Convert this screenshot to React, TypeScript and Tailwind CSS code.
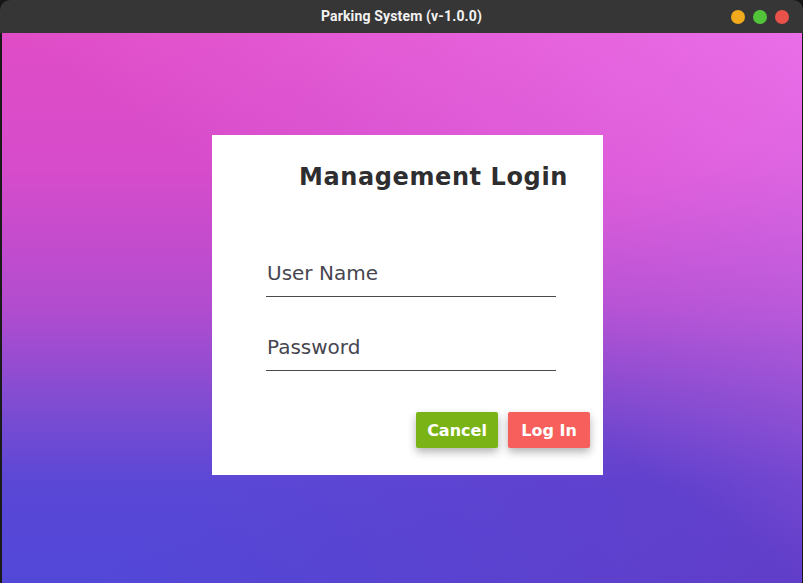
const TitleBar = () => {
  return (
    <div className="relative flex h-[33px] shrink-0 items-center justify-center rounded-t-[10px] bg-[#363636]">
      <span className="font-['Roboto',sans-serif] text-[14px] font-bold tracking-[0.15px] text-[#f2f2f2]">
        Parking System (v-1.0.0)
      </span>
      <div className="absolute right-[14px] top-[10px] flex gap-[8px]">
        <span className="h-[14px] w-[14px] rounded-full bg-[#f0aa1c]" />
        <span className="h-[14px] w-[14px] rounded-full bg-[#52c43a]" />
        <span className="h-[14px] w-[14px] rounded-full bg-[#e8524b]" />
      </div>
    </div>
  );
};

const Field = ({ label }: { label: string }) => {
  return (
    <div className="flex h-[45px] items-end border-b border-[#4a4a4a] pb-[11px] pl-[1px]">
      <span className="text-[20px] leading-[24px] text-[#474650]">{label}</span>
    </div>
  );
};

const App = () => {
  return (
    <div className="flex h-[583px] w-[803px] flex-col overflow-hidden bg-[#161616]">
      <TitleBar />
      <main className="flex flex-1 items-start justify-start border-x-[1px] border-l-[2px] border-[#1a1a1a] bg-[linear-gradient(to_bottom_left,rgba(236,124,246,0.7)_0%,rgba(236,124,246,0)_50%),linear-gradient(to_top_left,rgba(106,54,190,0.6)_0%,rgba(106,54,190,0)_45%),linear-gradient(to_bottom,#e04cc6_0%,#d64ccb_25%,#b24ccf_50%,#7e4cd2_68%,#5a47d6_82%,#5248d8_100%)] pl-[210px] pt-[102px]">
        <div className="flex h-[340px] w-[391px] flex-col bg-white font-['DejaVu_Sans',sans-serif]">
          <h1 className="pl-[87px] pt-[26px] text-[24px] font-bold leading-[32px] tracking-[0.6px] text-[#2e2e30]">
            Management Login
          </h1>
          <div className="ml-[54px] mr-[47px] mt-[59px] flex flex-col gap-[29px]">
            <Field label="User Name" />
            <Field label="Password" />
          </div>
          <div className="mr-[13px] mt-[41px] flex justify-end gap-[10px]">
            <button className="h-[36px] w-[82px] rounded-[2px] bg-[#7ab316] pt-[2px] text-[16px] font-bold text-white shadow-[0_4px_8px_rgba(0,0,0,0.3)]">
              Cancel
            </button>
            <button className="h-[36px] w-[82px] rounded-[2px] bg-[#f65f5c] pt-[2px] text-[16px] font-bold text-white shadow-[0_4px_8px_rgba(0,0,0,0.3)]">
              Log In
            </button>
          </div>
        </div>
      </main>
    </div>
  );
};

export default App;
